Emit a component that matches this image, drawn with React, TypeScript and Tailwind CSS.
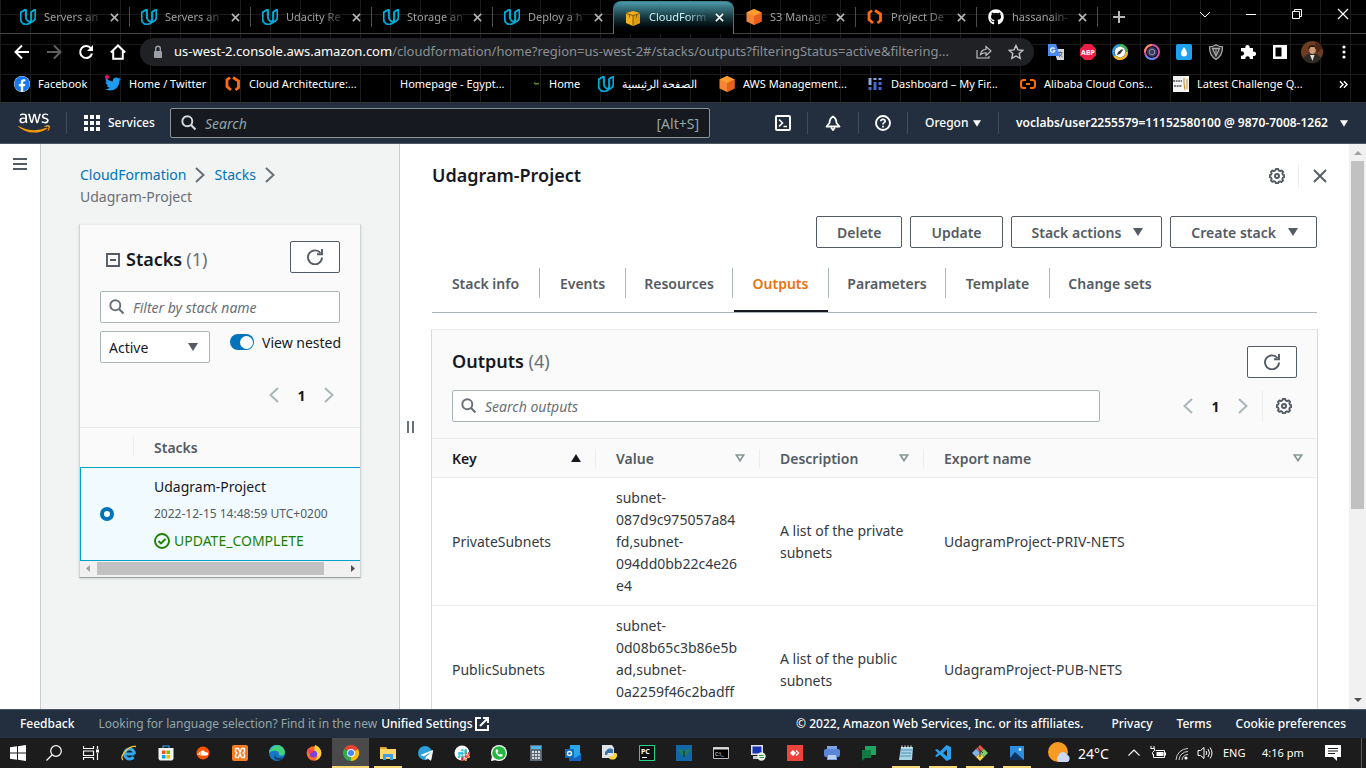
import React from "react";
import { FaAws, FaFacebook, FaGithub, FaSlack, FaSoundcloud, FaTelegramPlane, FaTwitter, FaWhatsapp } from "react-icons/fa";
import { SiUdacity } from "react-icons/si";

type Kids = { children?: React.ReactNode };

const Svg = ({ children, box = 16, cls = "size-4" }: Kids & { box?: number; cls?: string }) => (
  <svg viewBox={`0 0 ${box} ${box}`} className={`block shrink-0 ${cls}`} fill="none" aria-hidden="true">
    {children}
  </svg>
);

/* ---------- shared glyphs ---------- */

const Udacity = () => <SiUdacity stroke="#02b3e4" strokeWidth="1.4" className="block size-4 shrink-0 text-[#02b3e4]" />;

const Cube = () => (
  <Svg>
    <path d="M8 0l7.5 3.5v9L8 16 .5 12.500v-9z" fill="#f58534" />
    <path d="M8 0l7.500 3.500L8 7 .5 3.500z" fill="#ff9d2e" />
    <path d="M15.500 3.500v9L8 16V7z" fill="#e8611c" />
  </Svg>
);

const GoldCube = () => (
  <Svg>
    <path d="M1 3l7-2 7 2v10l-7 3-7-3z" fill="#f2b01e" />
    <path d="M8 6v10l7-3V4z" fill="#e09b12" />
    <path d="M1 3.500l7 2 7-2M8 5.500V16" stroke="#7a5200" strokeWidth=".9" />
    <path d="M4.500 4.500v3M11.500 4.500v3" stroke="#7a5200" strokeWidth=".9" />
  </Svg>
);

const Braces = () => (
  <Svg>
    <path d="M5 1.500L2 4v6.500L6 14" stroke="#ff6a13" strokeWidth="2.800" />
    <path d="M8 1.500l5.500 3.500v6.500l-3 2.500" stroke="#ff6a13" strokeWidth="2.800" />
  </Svg>
);

const SearchGlyph = ({ cls }: { cls: string }) => (
  <Svg cls={cls}>
    <circle cx="6.300" cy="6.300" r="5" stroke="currentColor" strokeWidth="1.900" />
    <path d="M10 10l4.500 4.500" stroke="currentColor" strokeWidth="2.100" />
  </Svg>
);

const RefreshGlyph = () => (
  <Svg cls="size-4 text-[#545b64]">
    <path d="M15 8.500A7 7 0 1 1 13.500 4" stroke="currentColor" strokeWidth="1.900" />
    <path d="M15 0v5.200H10" stroke="currentColor" strokeWidth="1.900" />
  </Svg>
);

const GearGlyph = () => (
  <Svg cls="size-4 text-[#545b64]">
    <path
      d="M6.800 1h2.400l.5 1.500 1.500.6 1.500-.7 1.400 1.500-.8 1.500.7 1.400 1.200.4v1.900l-1.300.5-.6 1.500.7 1.400-1.500 1.500-1.500-.7-1.300.6-.5 1.300H6.800l-.5-1.400-1.400-.6-1.500.7L2 12.500l.7-1.500-.6-1.400L.8 9.100V7.200l1.300-.5.6-1.400L2 3.900l1.400-1.500 1.500.7 1.400-.6z"
      stroke="currentColor"
      strokeWidth="1.900"
      strokeLinejoin="round"
    />
    <circle cx="8" cy="8" r="2" stroke="currentColor" strokeWidth="2" />
  </Svg>
);

const Chevron = ({ left, cls }: { left?: boolean; cls: string }) => (
  <Svg cls={cls}>
    <path d={left ? "M12 1L4.500 8l7.500 7" : "M4 1l7.500 7L4 15"} stroke="currentColor" strokeWidth="2" />
  </Svg>
);

const Caret = ({ cls }: { cls: string }) => (
  <svg viewBox="0 0 10 8" className={`block shrink-0 ${cls}`} aria-hidden="true">
    <path d="M0 0h10L5 8z" fill="currentColor" />
  </svg>
);

/* ---------- browser chrome ---------- */

const tabs = [
  { title: "Servers an", icon: <Udacity /> },
  { title: "Servers an", icon: <Udacity /> },
  { title: "Udacity Re", icon: <Udacity /> },
  { title: "Storage an", icon: <Udacity /> },
  { title: "Deploy a h", icon: <Udacity /> },
  { title: "CloudForm", icon: <GoldCube />, active: true },
  { title: "S3 Manage", icon: <Cube /> },
  { title: "Project De", icon: <Braces /> },
  { title: "hassanain-", icon: <FaGithub className="block size-4 shrink-0 text-white" /> },
];

const TabStrip = () => (
  <div className="flex h-[34px] shrink-0 items-stretch border-b border-[#444] pl-2">
    {tabs.map((t, i) => (
      <div
        key={i}
        className={
          t.active
            ? "relative -mb-px mt-px flex w-[121px] items-center rounded-t-lg border-x border-t border-[#3b7f8c] bg-linear-to-b from-[#4c9aaa] via-[#16343a] to-black pb-px pl-[11px] pr-1"
            : "relative flex w-[121px] items-center pl-3 pr-1 pt-px"
        }
      >
        {t.icon}
        <span
          className={`ml-2 w-[62px] overflow-hidden whitespace-nowrap text-[11px] mask-r-from-60% ${t.active ? "text-[#c5f4ff]" : "text-[#a0a0a0]"}`}
        >
          {t.title}
        </span>
        <button aria-label="Close tab" className={`flex size-4 items-center justify-center ${t.active ? "text-white" : "text-[#b8b8b8]"}`}>
          <Svg box={10} cls="size-[9px]">
            <path d="M1 1l8 8M9 1L1 9" stroke="currentColor" strokeWidth="1.700" />
          </Svg>
        </button>
        {!t.active && i !== 4 && <span className="absolute -right-px top-[7px] h-5 w-px bg-[#4c4c4c]" />}
      </div>
    ))}
    <button aria-label="New tab" className="flex w-11 items-center justify-center text-[#b8b8b8]">
      <Svg cls="size-4">
        <path d="M8 2v12M2 8h12" stroke="currentColor" strokeWidth="2" />
      </Svg>
    </button>
    <div className="ml-auto flex h-7 items-center gap-[30px] pr-[15px] text-white">
      <button aria-label="Search tabs">
        <Svg cls="size-4">
          <path d="M3 6l5 5 5-5" stroke="currentColor" />
        </Svg>
      </button>
      <button aria-label="Minimize">
        <Svg cls="size-4">
          <path d="M3 8.500h10" stroke="currentColor" />
        </Svg>
      </button>
      <button aria-label="Restore">
        <Svg cls="size-4">
          <path d="M3.500 5.500h7v7h-7zM5.500 5.500v-2h7v7h-2" stroke="currentColor" />
        </Svg>
      </button>
      <button aria-label="Close window">
        <Svg cls="size-4">
          <path d="M3 3l10 10M13 3L3 13" stroke="currentColor" strokeWidth="1.200" />
        </Svg>
      </button>
    </div>
  </div>
);

const extensions = [
  <Svg key="translate">
    <path d="M6 5h10v11H9z" fill="#d5d9dd" />
    <path d="M0 0h8l4 12H0z" fill="#4a8af4" />
    <path d="M6.500 4.800a2.200 2.200 0 1 0 .3 2H4.800" stroke="#fff" strokeWidth="1.100" />
    <path d="M10.500 8.500h4M12.500 7.500v1M14 9c-.5 2-1.500 3-3 4M11.500 9.500c.5 1.500 1.500 2.500 3 3.500" stroke="#5b6670" />
  </Svg>,
  <Svg key="abp">
    <path d="M4.700 0h6.600L16 4.700v6.600L11.300 16H4.700L0 11.300V4.700z" fill="#ed1e45" />
    <text x="8" y="10.800" fontSize="7" fontWeight="700" textAnchor="middle" fill="#fff">
      ABP
    </text>
  </Svg>,
  <Svg key="clock">
    <circle cx="8" cy="8" r="6.800" stroke="#2d9be0" strokeWidth="2.400" />
    <path d="M8 1.200A6.800 6.800 0 0 1 14.800 8" stroke="#39b54a" strokeWidth="2.400" />
    <path d="M14.800 8A6.800 6.800 0 0 1 2.500 12" stroke="#f6b91c" strokeWidth="2.400" />
    <circle cx="8" cy="8" r="5.400" fill="#fff" />
    <path d="M5 11l1-3 4-3 1 1-3 4z" fill="#333" />
  </Svg>,
  <Svg key="lens">
    <circle cx="8" cy="8" r="7" stroke="#d94fb0" strokeWidth="2" />
    <path d="M1 8a7 7 0 0 1 7-7" stroke="#f58b5b" strokeWidth="2" />
    <path d="M2 12a7 7 0 0 0 9 2" stroke="#4c8df5" strokeWidth="2" />
    <circle cx="8" cy="8" r="5" fill="#3a3a5e" />
    <circle cx="8" cy="8" r="2.800" stroke="#8d8fb8" />
  </Svg>,
  <Svg key="drop">
    <rect width="16" height="16" rx="2" fill="#1da1f2" />
    <path d="M8 3c2 3 3 4.500 3 6.500a3 3 0 0 1-6 0C5 7.500 6 6 8 3z" fill="#fff" />
  </Svg>,
  <Svg key="shield">
    <path d="M8 .8c2 1.500 4 2 6.500 2 0 6-1.500 10-6.500 12.500C3 12.800 1.500 8.800 1.500 2.800 4 2.800 6 2.300 8 .8z" fill="#222" stroke="#a9a9a9" strokeWidth="1.300" />
    <path d="M4.500 4.500h7L8 12z" stroke="#a9a9a9" strokeWidth="1.300" />
    <path d="M8 4.500V10" stroke="#a9a9a9" />
  </Svg>,
  <Svg key="puzzle">
    <path d="M1 4h4.500a2.200 2.200 0 1 1 4 0H13v3.800a2.200 2.200 0 1 1 0 4V15H9.700a2.200 2.200 0 1 0-4.200 0H1v-3.500a2.200 2.200 0 1 0 0-4z" fill="#fff" />
  </Svg>,
  <Svg key="panel">
    <path d="M1 1h14v14H1z M3.500 3.500v9h6v-9z" fill="#fff" fillRule="evenodd" />
  </Svg>,
];

const Toolbar = () => (
  <div className="flex h-9 shrink-0 items-center pl-[14px] pr-[14px] text-white">
    <div className="flex gap-4">
      <button aria-label="Back">
        <Svg>
          <path d="M15 8H2M8 1.500L1.500 8 8 14.500" stroke="currentColor" strokeWidth="2" />
        </Svg>
      </button>
      <button aria-label="Forward" className="text-[#5f5f5f]">
        <Svg>
          <path d="M1 8h13M8 1.500L14.500 8 8 14.500" stroke="currentColor" strokeWidth="2" />
        </Svg>
      </button>
      <button aria-label="Reload">
        <Svg>
          <path d="M13 4.500A6 6 0 1 0 14 9.500" stroke="currentColor" strokeWidth="2" />
          <path d="M15 1v6H9z" fill="currentColor" />
        </Svg>
      </button>
      <button aria-label="Home">
        <Svg>
          <path d="M.8 8.500L8 1.500l7.200 7M3.200 7v7.800h9.600V7" stroke="currentColor" strokeWidth="2" />
        </Svg>
      </button>
    </div>
    <div className="ml-[14px] flex h-7 min-w-0 flex-1 items-center rounded-full bg-[#202124] pl-[10px] pr-2 text-[#9aa0a6]">
      <Svg>
        <rect x="4" y="7" width="8" height="7" rx="1" fill="currentColor" />
        <path d="M5.700 7V4.500a2.300 2.300 0 0 1 4.600 0V7" stroke="currentColor" strokeWidth="1.400" />
      </Svg>
      <p className="ml-2 min-w-0 flex-1 overflow-hidden whitespace-nowrap text-[13px]">
        <span className="text-white">us-west-2.console.aws.amazon.com</span>
        <span className="text-[#8b8f94]">/cloudformation/home?region=us-west-2#/stacks/outputs?filteringStatus=active&amp;filtering...</span>
      </p>
      <button aria-label="Share" className="mr-4 text-[#c4c7cb]">
        <Svg>
          <path d="M1 6v8h12v-2M4.500 10.500C5 7 7 5.500 10 5.500V2.500l5 4.500-5 4.500V8.700C8 8.700 6 9 4.500 10.500z" stroke="currentColor" strokeWidth="1.100" />
        </Svg>
      </button>
      <button aria-label="Bookmark" className="mr-[2px] text-[#c4c7cb]">
        <Svg>
          <path d="M8 1.500l2 4.400 4.800.5-3.600 3.200 1 4.800L8 12l-4.200 2.400 1-4.800L1.200 6.400 6 5.900z" stroke="currentColor" strokeWidth="1.400" />
        </Svg>
      </button>
    </div>
    <div className="ml-[14px] flex items-center gap-4">
      {extensions}
      <Svg cls="-mx-[3px] size-[22px]" box={22}>
        <circle cx="11" cy="11" r="11" fill="#6b3d22" />
        <path d="M14 1.500a11 11 0 0 1 7 6L16 12z" fill="#4a2513" />
        <path d="M2 17l5-4 4-1 5 1 4 4a11 11 0 0 1-18 0z" fill="#2a2a26" />
        <ellipse cx="11.500" cy="9" rx="3.200" ry="4" fill="#d39a78" />
        <path d="M7.500 8.500C6.500 3 16 2.500 15 8.500L13.500 6h-4z" fill="#20130c" />
        <path d="M9 14l2.500 6 2-6z" fill="#e8ddd2" />
      </Svg>
      <button aria-label="Menu">
        <Svg>
          <circle cx="8" cy="3" r="1.600" fill="#fff" />
          <circle cx="8" cy="8" r="1.600" fill="#fff" />
          <circle cx="8" cy="13" r="1.600" fill="#fff" />
        </Svg>
      </button>
    </div>
  </div>
);

const bookmarks = [
  { w: "w-[91px]", label: "Facebook", icon: <FaFacebook className="block size-4 rounded-full bg-white text-[#1877f2]" /> },
  {
    w: "w-[120px]",
    label: "Home / Twitter",
    icon: (
      <span className="relative block">
        <FaTwitter className="block size-4 text-[#1d9bf0]" />
        <span className="absolute -top-px left-0 size-1 rounded-full bg-[#f0127a]" />
      </span>
    ),
  },
  { w: "w-[151px]", label: "Cloud Architecture:...", icon: <Braces /> },
  { w: "w-[149px]", label: "Homepage - Egypt...", icon: <span className="block size-4" /> },
  {
    w: "w-[73px]",
    label: "Home",
    icon: (
      <Svg>
        <path d="M9 7l2 1 3-.5" stroke="#5f8a1f" strokeWidth="1.500" />
      </Svg>
    ),
  },
  { w: "w-[121px]", label: "الصفحة الرئيسية", icon: <Udacity /> },
  { w: "w-[148px]", label: "AWS Management...", icon: <Cube /> },
  {
    w: "w-[153px]",
    label: "Dashboard – My Fir...",
    icon: (
      <Svg>
        <path d="M3 2v7M8 2v2M13 2v2" stroke="#8ba6e8" strokeWidth="3" />
        <path d="M3 11v3M8 6v8M13 6v3M13 11v3" stroke="#3f6bd8" strokeWidth="3" />
      </Svg>
    ),
  },
  {
    w: "w-[153px]",
    label: "Alibaba Cloud Cons...",
    icon: (
      <Svg>
        <path d="M6 4H3.500Q1 4 1 6.500v3Q1 12 3.500 12H6M10 4h2.500Q15 4 15 6.500v3Q15 12 12.500 12H10M6 8h4" stroke="#ff6a00" strokeWidth="2" />
      </Svg>
    ),
  },
  {
    w: "w-[150px]",
    label: "Latest Challenge Q...",
    icon: (
      <Svg>
        <path d="M0 0h16v16H0z" fill="#f4f4f4" />
        <path d="M0 5h9M1 10h8" stroke="#555" strokeWidth="1.500" strokeDasharray="2 .6" />
        <path d="M11 2v5l1 7M14 3v10" stroke="#c58a2e" />
      </Svg>
    ),
  },
];

const Bookmarks = () => (
  <nav aria-label="Bookmarks" className="flex h-[33px] shrink-0 items-center border-b border-[#333] pb-1 pl-[14px] pr-[18px] text-[11px] text-white">
    {bookmarks.map((b) => (
      <a key={b.label} href="#" className={`flex shrink-0 items-center gap-2 whitespace-nowrap ${b.w}`}>
        {b.icon}
        {b.label}
      </a>
    ))}
    <button aria-label="More bookmarks" className="ml-auto">
      <Svg cls="size-[9px]" box={10}>
        <path d="M1 1.500L4.500 5 1 8.500M5.500 1.500L9 5 5.500 8.500" stroke="#fff" strokeWidth="1.600" />
      </Svg>
    </button>
  </nav>
);

/* ---------- AWS header and footer ---------- */

const Divider = () => <span className="h-[22px] w-px shrink-0 bg-[#414d5c]" />;

const AwsHeader = () => (
  <header className="flex h-[41px] shrink-0 items-center border-b border-[#4d5864] bg-[#232f3e] text-[12px] font-semibold text-white">
    <svg width="0" height="0" className="absolute" aria-hidden="true">
      <linearGradient id="awsTint" gradientUnits="userSpaceOnUse" x1="0" y1="0" x2="0" y2="512">
        <stop offset=".62" stopColor="#fff" />
        <stop offset=".62" stopColor="#ff9900" />
      </linearGradient>
    </svg>
    <a href="#" aria-label="AWS" className="ml-[18px] mr-4 block">
      <FaAws fill="url(#awsTint)" className="block size-8" />
    </a>
    <Divider />
    <button className="ml-[17px] mr-[17px] flex w-[69px] items-center gap-2 font-medium">
      <Svg>
        <path d="M2 0v16M8 0v16M14 0v16" stroke="#fff" strokeWidth="4" strokeDasharray="4 2" />
      </Svg>
      Services
    </button>
    <label className="flex h-[30px] w-[540px] min-w-0 items-center rounded-xs border border-[#879596] bg-[#16191f] pl-[10px] pr-[10px] text-[14px] font-normal text-[#95a5a6]">
      <SearchGlyph cls="size-4 text-[#d5dbdb]" />
      <input aria-label="Search" placeholder="Search" className="ml-2 min-w-0 flex-1 bg-transparent outline-none placeholder:italic placeholder:text-[#95a5a6]" />
      [Alt+S]
    </label>
    <div className="ml-auto flex items-center pr-[18px]">
      <button aria-label="CloudShell" className="mr-4">
        <Svg>
          <rect x="1" y="1" width="14" height="14" rx="1" stroke="#fff" strokeWidth="2" />
          <path d="M4 4.500L7.500 8 4 11.500M8.500 11.500H12" stroke="#fff" strokeWidth="1.600" />
        </Svg>
      </button>
      <Divider />
      <button aria-label="Notifications" className="mx-[17px]">
        <Svg>
          <path d="M1.500 11.500h13L11.500 8c0-3-1-5-3.500-6.500C5.500 3 4.500 5 4.500 8z" stroke="#fff" strokeWidth="1.800" strokeLinejoin="round" />
          <path d="M6 12.500L8 15l2-2.500" stroke="#fff" strokeWidth="1.800" />
        </Svg>
      </button>
      <Divider />
      <button aria-label="Help" className="mx-4">
        <Svg>
          <circle cx="8" cy="8" r="7" stroke="#fff" strokeWidth="1.900" />
          <path d="M5.800 6.300C6 3.500 10.300 3.800 10.200 6.200 10 7.800 8 7.600 8 9.500M8 10.800v1.700" stroke="#fff" strokeWidth="1.700" />
        </Svg>
      </button>
      <Divider />
      <button className="ml-[17px] mr-[17px] flex w-14 items-center justify-between whitespace-nowrap font-medium">
        Oregon <Caret cls="h-[7px] w-2" />
      </button>
      <Divider />
      <button className="ml-[17px] flex w-[332px] items-center justify-between whitespace-nowrap">
        voclabs/user2255579=11152580100 @ 9870-7008-1262 <Caret cls="h-[7px] w-2" />
      </button>
    </div>
  </header>
);

const AwsFooter = () => (
  <footer className="flex h-[29px] shrink-0 items-center border-t border-[#4d5864] bg-[#232f3e] px-5 text-[12px] font-medium text-white">
    <button>Feedback</button>
    <p className="ml-6 flex items-center whitespace-nowrap font-normal text-[#95a5a6]">
      Looking for language selection? Find it in the new
      <a href="#" className="ml-1 flex items-center gap-[2px] font-medium text-white">
        Unified Settings
        <Svg cls="size-[14px]" box={14}>
          <path d="M6 1H1v12h12V8M8 1h5v5M13 1L5 9" stroke="#fff" strokeWidth="2" />
        </Svg>
      </a>
    </p>
    <span className="ml-auto whitespace-nowrap">© 2022, Amazon Web Services, Inc. or its affiliates.</span>
    <a href="#" className="ml-7">Privacy</a>
    <a href="#" className="ml-6">Terms</a>
    <a href="#" className="ml-6 whitespace-nowrap">Cookie preferences</a>
  </footer>
);

/* ---------- stacks side panel ---------- */

const Pager = () => (
  <div className="flex items-center text-[14px]">
    <button aria-label="Previous page" className="text-[#aab7b8]">
      <Chevron left cls="size-4" />
    </button>
    <button className="w-[39px] text-center font-bold">1</button>
    <button aria-label="Next page" className="text-[#aab7b8]">
      <Chevron cls="size-4" />
    </button>
  </div>
);

const RefreshButton = () => (
  <button aria-label="Refresh" className="flex h-8 w-[50px] shrink-0 items-center justify-center rounded-xs border border-[#545b64] bg-white">
    <RefreshGlyph />
  </button>
);

const StacksPanel = () => (
  <aside className="flex w-[360px] shrink-0 flex-col border-x border-[#c8cccc] bg-[#f2f3f3] pl-[38px] pr-[38px] pt-5">
    <nav aria-label="Breadcrumb" className="ml-px flex flex-wrap items-center leading-[22px]">
      <a href="#" className="text-[#0073bb]">CloudFormation</a>
      <Chevron cls="mx-[6px] size-4 text-[#687078]" />
      <a href="#" className="text-[#0073bb]">Stacks</a>
      <Chevron cls="mx-[6px] size-4 text-[#687078]" />
      <span className="w-full text-[#687078]">Udagram-Project</span>
    </nav>
    <section className="mt-4 border border-t-[#eaeded] border-x-[#d0d4d4] border-b-[#9aa3a5] bg-[#fafafa] shadow-sm">
      <div className="px-5 pt-4">
        <div className="flex items-start justify-between">
          <h2 className="ml-[5px] mt-[3px] flex items-center text-[18px] font-semibold leading-[30px]">
            <button aria-label="Collapse" className="mr-[5px] mt-[2px]">
              <Svg>
                <path d="M2 2h12v12H2zM5 8h6" stroke="#545b64" strokeWidth="1.900" />
              </Svg>
            </button>
            Stacks <span className="ml-1 font-normal text-[#687078]">(1)</span>
          </h2>
          <RefreshButton />
        </div>
        <label className="mt-[17px] flex h-8 items-center gap-2 rounded-xs border border-[#aab7b8] bg-white px-2">
          <SearchGlyph cls="size-4 text-[#687078]" />
          <input aria-label="Filter by stack name" placeholder="Filter by stack name" className="min-w-0 flex-1 bg-transparent outline-none placeholder:italic placeholder:text-[#687078]" />
        </label>
        <div className="mt-2 flex justify-between">
          <div className="relative h-8 w-[110px]">
            <select aria-label="Status filter" className="h-8 w-full appearance-none rounded-xs border border-[#aab7b8] bg-white pl-2">
              <option>Active</option>
            </select>
            <Caret cls="pointer-events-none absolute right-3 top-3 h-2 w-[10px] text-[#545b64]" />
          </div>
          <label className="flex h-[22px] items-center gap-2">
            <input type="checkbox" defaultChecked className="peer sr-only" />
            <span className="flex h-4 w-6 items-center justify-end rounded-full bg-[#0073bb] pr-px">
              <span className="size-[13px] rounded-full bg-white" />
            </span>
            <span className="w-[78px] whitespace-nowrap">View nested</span>
          </label>
        </div>
        <div className="flex h-16 items-center justify-end pr-[3px]">
          <Pager />
        </div>
      </div>
      <div className="overflow-hidden">
        <table className="w-full border-collapse text-left">
          <thead>
            <tr className="h-[39px] border-t border-[#eaeded] text-[#545b64]">
              <th className="w-[54px] p-0">
                <span className="ml-auto block h-5 w-px bg-[#eaeded]" />
              </th>
              <th className="pl-5 font-semibold">Stacks</th>
            </tr>
          </thead>
          <tbody>
            <tr className="h-[94px] bg-[#f1faff] shadow-[inset_1px_1px_0_#00a1c9,inset_0_-1px_0_#00a1c9]">
              <td className="p-0">
                <input
                  type="radio"
                  aria-label="Select Udagram-Project"
                  defaultChecked
                  className="ml-5 block size-[14px] appearance-none rounded-full border-4 border-[#0073bb] bg-white"
                />
              </td>
              <td className="pl-5 leading-[22px]">
                <div>Udagram-Project</div>
                <div className="my-[5px] whitespace-nowrap text-[12px] text-[#545b64]">2022-12-15 14:48:59 UTC+0200</div>
                <div className="flex items-center gap-1 text-[#1d8102]">
                  <Svg>
                    <circle cx="8" cy="8" r="7" stroke="currentColor" strokeWidth="1.900" />
                    <path d="M4.500 8l2.500 2.500 4.500-4.500" stroke="currentColor" strokeWidth="1.900" />
                  </Svg>
                  UPDATE_COMPLETE
                </div>
              </td>
            </tr>
          </tbody>
        </table>
        <div className="flex h-4 items-center justify-between bg-[#f1f1f1] pl-[6px] pr-[5px]">
          <svg viewBox="0 0 4 7" className="h-[7px] w-1" aria-hidden="true">
            <path d="M4 0v7L0 3.500z" fill="#a3a3a3" />
          </svg>
          <span className="ml-[7px] mr-auto h-[13px] w-[227px] bg-[#c1c1c1]" />
          <svg viewBox="0 0 4 7" className="h-[7px] w-1" aria-hidden="true">
            <path d="M0 0v7l4-3.500z" fill="#505050" />
          </svg>
        </div>
      </div>
    </section>
  </aside>
);

/* ---------- stack detail ---------- */

const ActionButton = ({ children, menu }: Kids & { menu?: boolean }) => (
  <button className="flex h-8 items-center gap-3 whitespace-nowrap rounded-xs border border-[#545b64] bg-white px-5 font-semibold text-[#545b64]">
    {children}
    {menu && <Caret cls="mr-[-2px] h-2 w-[10px]" />}
  </button>
);

const detailTabs = [
  { label: "Stack info", w: "w-[108px]" },
  { label: "Events", w: "w-[86px]" },
  { label: "Resources", w: "w-[107px]" },
  { label: "Outputs", w: "w-[96px]", active: true },
  { label: "Parameters", w: "w-[117px]" },
  { label: "Template", w: "w-[104px]" },
  { label: "Change sets", w: "w-[120px]" },
];

const rows = [
  {
    key: "PrivateSubnets",
    value: ["subnet-", "087d9c975057a84", "fd,subnet-", "094dd0bb22c4e26", "e4"],
    description: "A list of the private subnets",
    exportName: "UdagramProject-PRIV-NETS",
  },
  {
    key: "PublicSubnets",
    value: ["subnet-", "0d08b65c3b86e5b", "ad,subnet-", "0a2259f46c2badff"],
    description: "A list of the public subnets",
    exportName: "UdagramProject-PUB-NETS",
  },
];

const Th = ({ children, sorted, last, w }: Kids & { sorted?: boolean; last?: boolean; w: string }) => (
  <th className={`p-0 ${w}`}>
    <button className={`flex h-[19px] w-full items-center justify-between pl-5 pr-[14px] font-semibold ${last ? "" : "border-r border-[#eaeded]"} ${sorted ? "text-[#16191f]" : "text-[#545b64]"}`}>
      {children}
      <svg viewBox="0 0 10 8" className="block h-2 w-[10px]" aria-hidden="true">
        {sorted ? <path d="M0 8h10L5 0z" fill="#16191f" /> : <path d="M1.300 1h7.400L5 6.700z" stroke="#879596" strokeWidth="1.700" fill="none" />}
      </svg>
    </button>
  </th>
);

const Detail = () => (
  <main className="min-w-0 flex-1 overflow-hidden pl-[17px] pr-8 pt-[18px]">
    <div className="flex h-7 items-center">
      <h1 className="pb-[2px] text-[18px] font-semibold">Udagram-Project</h1>
      <button aria-label="Preferences" className="ml-auto mr-[13px]">
        <GearGlyph />
      </button>
      <span className="h-6 w-px bg-[#eaeded]" />
      <button aria-label="Close panel" className="-mr-[11px] ml-[13px]">
        <Svg>
          <path d="M2 2l12 12M14 2L2 14" stroke="#545b64" strokeWidth="1.900" />
        </Svg>
      </button>
    </div>
    <div className="mt-[26px] flex justify-end gap-2">
      <ActionButton>Delete</ActionButton>
      <ActionButton>Update</ActionButton>
      <ActionButton menu>Stack actions</ActionButton>
      <ActionButton menu>Create stack</ActionButton>
    </div>
    <div role="tablist" className="mt-3 flex h-[53px] items-stretch border-b border-[#aab7b8]">
      {detailTabs.map((t, i) => (
        <button
          key={t.label}
          role="tab"
          aria-selected={!!t.active}
          className={`flex flex-col justify-end whitespace-nowrap font-semibold ${t.w} ${t.active ? "text-[#ec7211]" : "text-[#545b64]"}`}
        >
          <span className={`flex h-[30px] w-full items-center justify-center ${i < 6 ? "border-r border-[#aab7b8]" : ""}`}>{t.label}</span>
          <span className="flex h-3.5 w-full items-end px-px">
            <span className={`h-[2px] w-full ${t.active ? "bg-[#16191f]" : ""}`} />
          </span>
        </button>
      ))}
    </div>
    <section className="-mx-px mt-4 border border-[#d5dbdb] border-t-[#eaeded] bg-[#fafafa]">
      <div className="px-5 pt-4">
        <div className="flex justify-between">
          <h2 className="text-[18px] font-semibold leading-[30px]">
            Outputs <span className="font-normal text-[#687078]">(4)</span>
          </h2>
          <RefreshButton />
        </div>
        <div className="mt-3 flex items-center pb-4">
          <label className="flex h-8 max-w-[648px] flex-1 items-center gap-2 rounded-xs border border-[#aab7b8] bg-white px-2">
            <SearchGlyph cls="size-4 text-[#687078]" />
            <input aria-label="Search outputs" placeholder="Search outputs" className="min-w-0 flex-1 bg-transparent outline-none placeholder:italic placeholder:text-[#687078]" />
          </label>
          <div className="ml-auto mr-[11px]">
            <Pager />
          </div>
          <button aria-label="Table preferences" className="mr-[5px] flex h-8 items-center border-l border-[#eaeded] pl-[13px]">
            <GearGlyph />
          </button>
        </div>
      </div>
      <table className="w-full table-fixed border-collapse text-left">
        <thead>
          <tr className="h-[39px] border-y border-[#eaeded]">
            <Th w="w-[164px]" sorted>Key</Th>
            <Th w="w-[164px]">Value</Th>
            <Th w="w-[164px]">Description</Th>
            <Th w="w-auto" last>Export name</Th>
          </tr>
        </thead>
        <tbody>
          {rows.map((r) => (
            <tr key={r.key} className="h-32 border-b border-[#eaeded] bg-white leading-[22px] text-[#333a44]">
              <td className="pl-5">{r.key}</td>
              <td className="pb-2 pl-5 pt-[9px] align-top">
                {r.value.map((line) => (
                  <React.Fragment key={line}>
                    {line}
                    <br />
                  </React.Fragment>
                ))}
              </td>
              <td className="pl-5 pr-4">{r.description}</td>
              <td className="pl-5">{r.exportName}</td>
            </tr>
          ))}
        </tbody>
      </table>
    </section>
  </main>
);

/* ---------- Windows taskbar ---------- */

const taskApps: { name: string; icon: React.ReactNode; open?: boolean; active?: boolean }[] = [
  {
    name: "Internet Explorer",
    icon: (
      <>
        <path d="M13.500 9H4.500M13.500 9A5 5 0 1 0 12.500 12" stroke="#35a8ee" strokeWidth="3" />
        <path d="M2 15C-2 11 8 0 15 1.500" stroke="#f6c72e" strokeWidth="1.300" />
      </>
    ),
  },
  {
    name: "Store",
    icon: (
      <>
        <path d="M5 3V1h6v2" stroke="#2ba3e6" strokeWidth="1.200" />
        <path d="M.5 3h15v11l-1.500 1.500h-12L.5 14z" fill="#f5f5f5" />
        <path d="M4 5.500h3.500V9H4z" fill="#f25022" />
        <path d="M8.500 5.500H12V9H8.500z" fill="#7fba00" />
        <path d="M4 10h3.500v3.500H4z" fill="#00a4ef" />
        <path d="M8.500 10H12v3.500H8.500z" fill="#ffb900" />
      </>
    ),
  },
  {
    name: "SoundCloud",
    icon: (
      <>
        <circle cx="8" cy="8" r="6.500" fill="#ff5500" />
        <path d="M3 8.500v1.500M4.500 7v3" stroke="#fff" />
        <path d="M5.500 10.500V6.500C7 5 9.500 5.500 10 7.200c2-.5 3.500.8 3 2.300-.2.700-.8 1-1.500 1z" fill="#fff" />
      </>
    ),
  },
  {
    name: "XAMPP",
    icon: (
      <>
        <rect width="16" height="16" rx="2" fill="#fb7a24" />
        <path d="M3.500 3.500h3L8 7.500l1.500-4h3v3L11 8l1.500 1.500v3h-3L8 8.500l-1.500 4h-3v-3L5 8 3.500 6.500z" stroke="#fff" strokeWidth="1.300" strokeLinejoin="round" />
      </>
    ),
  },
  {
    name: "Edge",
    icon: (
      <>
        <circle cx="8" cy="8" r="8" fill="#1577c9" />
        <path d="M0 8a8 8 0 0 1 16 0c0 3-5 3.500-6 1.500C11 6 4 4 0 8z" fill="#43d17c" />
        <path d="M0 8a8 8 0 0 1 9-7.900C5 1 2 4 0 8z" fill="#2fb3e0" />
        <path d="M6.500 8.500C5 11.500 8 14 14 12.500l-2 2.400C7 16.500 3 13 6.500 8.500z" fill="#1c1c1c" opacity=".55" />
      </>
    ),
  },
  {
    name: "Firefox",
    icon: (
      <>
        <circle cx="8" cy="8.500" r="7.300" fill="#ff6a2b" />
        <path d="M9 0c5 2 7 6 6 10-1 3-3 5-6 5.500 4-4 1-7-1-8.500 1-2 0-4 1-7z" fill="#ffd43a" />
        <circle cx="7.500" cy="9" r="3.600" fill="#7542e5" />
        <path d="M1 4c3 0 5 1 7 3-2 .5-3 1.500-5 1z" fill="#ff3d55" />
      </>
    ),
  },
  {
    name: "Chrome",
    open: true,
    active: true,
    icon: (
      <>
        <path d="M8 8L1.100 4A8 8 0 0 1 15 4z" fill="#ea4335" />
        <path d="M8 8l7-4A8 8 0 0 1 8 16z" fill="#fbbc05" />
        <path d="M8 8v8A8 8 0 0 1 1.100 4z" fill="#34a853" />
        <circle cx="8" cy="8" r="4" fill="#fff" />
        <circle cx="8" cy="8" r="3" fill="#4285f4" />
      </>
    ),
  },
  {
    name: "File Explorer",
    open: true,
    icon: (
      <>
        <path d="M0 2h6l1 2h9v10H0z" fill="#ffd767" />
        <path d="M0 2h6l1 2H0z" fill="#e2a52c" />
        <path d="M3 15V9h10v6h-3v-3H6v3z" fill="#3e9fe8" />
      </>
    ),
  },
  {
    name: "Telegram",
    icon: (
      <>
        <circle cx="8" cy="8" r="7" fill="#2aa1da" />
        <FaTelegramPlane x="3" y="3.500" width="9" height="9" color="#fff" />
      </>
    ),
  },
  {
    name: "Slack",
    icon: (
      <>
        <circle cx="8" cy="8" r="7.500" fill="#fff" />
        <FaSlack x="3" y="3" width="10" height="10" fill="url(#slackTint)" />
      </>
    ),
  },
  {
    name: "WhatsApp",
    icon: (
      <>
        <circle cx="8" cy="8" r="8" fill="#fff" />
        <path d="M0 16l1-5 4 4z" fill="#fff" />
        <circle cx="8" cy="8" r="6.800" fill="#25b840" />
        <path d="M5 4.500C4 6 5 8.500 6.500 10S10 12.300 11.500 11l.3-1.300-2-1-1 1C7.500 9.200 6.700 8.200 6.400 7.200l.9-1-.8-2z" fill="#fff" />
      </>
    ),
  },
  {
    name: "Calculator",
    icon: (
      <>
        <path d="M2 0h12v16H2z" fill="#5f6b76" />
        <path d="M3 1h10v3H3z" fill="#4db8f0" />
        <path d="M5 6v9M8 6v9M11 6v9" stroke="#d4dae0" strokeWidth="2" strokeDasharray="2 1" />
      </>
    ),
  },
  {
    name: "Outlook",
    icon: (
      <>
        <path d="M5 0h10v8l1 1v7H4z" fill="#28a8ea" />
        <path d="M4 9l6 4 6-4v7H4z" fill="#1565c0" />
        <path d="M0 4h9v9H0z" fill="#0f6cbd" />
        <circle cx="4.500" cy="8.500" r="2" stroke="#fff" strokeWidth="1.400" />
      </>
    ),
  },
  {
    name: "Python IDLE",
    icon: (
      <>
        <path d="M0 0h10l2 3v10H0z" fill="#dfe3e6" />
        <path d="M5 5c0-2 6-2 6 0v3H6L5 10H3V7z" fill="#3775a9" />
        <path d="M11 8h3c2 1 1 4 0 5-1 2-6 2-7 0v-2h5z" fill="#ffd43b" />
      </>
    ),
  },
  {
    name: "PyCharm",
    icon: (
      <>
        <path d="M.5.500h15v15H.5z" fill="#101010" stroke="#21d789" />
        <text x="2" y="8.800" fontSize="7" fontWeight="700" fill="#fff">PC</text>
        <path d="M3 12.500h5" stroke="#fff" />
      </>
    ),
  },
  {
    name: "Butterfly",
    icon: (
      <>
        <path d="M0 0h16v16H0z" fill="#1267a6" />
        <path d="M8 8L6 4.500 2.500 4l1 4 2 .5-.5 3 3-2 3 2-.5-3 2-.5 1-4-3.500.5z" fill="#1f7f5a" />
        <path d="M8 6v6" stroke="#222" />
      </>
    ),
  },
  {
    name: "Command Prompt",
    icon: (
      <>
        <path d="M.5 2.500h15v11H.5z" fill="#000" stroke="#bbb" />
        <path d="M0 3.500h16" stroke="#ddd" strokeWidth="2" />
        <text x="2" y="10.500" fontSize="5" fill="#fff">C:\_</text>
      </>
    ),
  },
  {
    name: "Remote Desktop",
    icon: (
      <>
        <path d="M1 0h12v10H1z" fill="#dfe3e8" />
        <path d="M2.500 1.500h9v7h-9z" fill="#1733b5" />
        <path d="M3 11h8v3H3z" fill="#c8ccd2" />
        <circle cx="11.500" cy="11.500" r="4.200" fill="#e9efe8" />
        <path d="M9 10.500h4.500M14 12.500H9.500" stroke="#3a9a3a" />
      </>
    ),
  },
  {
    name: "AnyDesk",
    icon: (
      <>
        <path d="M0 0h16v16H0z" fill="#ef443b" />
        <path d="M6 5l3 3-3 3-3-3z" fill="#fff" />
        <path d="M9 5.500L11.500 8 9 10.500" stroke="#fff" strokeWidth="1.300" />
      </>
    ),
  },
  {
    name: "Printer",
    icon: (
      <>
        <path d="M3 1h10v4H3zM3 10h10v5H3z" fill="#7da2e6" />
        <rect y="4" width="16" height="8" rx="2" fill="#5b86d8" />
        <path d="M4 10h8v4H4z" fill="#b9cdf3" />
      </>
    ),
  },
  {
    name: "Chat",
    icon: (
      <>
        <path d="M4 1h11v9H6L4 12z" fill="#1fa463" />
        <path d="M1 5h9v8H4l-3 3z" fill="#0f7b41" />
      </>
    ),
  },
  {
    name: "Notepad",
    open: true,
    icon: (
      <>
        <path d="M3 2h12l-1 13H1z" fill="#a7d3e6" />
        <path d="M3 5h11M3 8h10M2.500 11H13" stroke="#4f93b0" />
        <path d="M4 .500v3M7 .500v3M10 .500v3M13 .500v3" stroke="#eee" />
      </>
    ),
  },
  {
    name: "VS Code",
    open: true,
    icon: <path d="M11.500 0L16 2v12l-4.500 2L5 9.500 2 12 0 11l3-3-3-3 2-1 3 2.500zM12 4.500L8 8l4 3.500z" fill="#2aa0ee" fillRule="evenodd" />,
  },
  {
    name: "Git",
    open: true,
    icon: (
      <>
        <path d="M8 0l4 4-4 4-4-4z" fill="#e8584a" />
        <path d="M12 4l4 4-4 4-4-4z" fill="#78d168" />
        <path d="M4 4l4 4-4 4-4-4z" fill="#7db2ee" />
        <path d="M8 8l4 4-4 4-4-4z" fill="#f0d34c" />
        <path d="M5.500 2l2.500 3v7M8 5l3 3" stroke="#333" />
      </>
    ),
  },
  {
    name: "Photos",
    open: true,
    icon: (
      <>
        <path d="M1 1h14v14H1z" fill="#2a8fe0" />
        <path d="M1 13l5-6 9 8H1z" fill="#10335e" />
        <circle cx="11" cy="4.500" r="1.300" fill="#fff" />
      </>
    ),
  },
];

const Taskbar = () => (
  <div className="flex h-[30px] shrink-0 items-stretch bg-[#1c1c1c] text-white">
    <svg width="0" height="0" className="absolute" aria-hidden="true">
      <linearGradient id="slackTint" x1="0" y1="0" x2="1" y2="1">
        <stop offset=".3" stopColor="#36c5f0" />
        <stop offset=".5" stopColor="#2eb67d" />
        <stop offset=".6" stopColor="#e01e5a" />
        <stop offset=".8" stopColor="#ecb22e" />
      </linearGradient>
    </svg>
    <button aria-label="Start" className="flex w-9 items-center justify-center">
      <Svg>
        <path d="M0 2.300l7-1v6.200H0zM8 1.200L16 0v7.500H8zM0 8.500h7v6.200l-7-1zM8 8.500h8V16l-8-1.200z" fill="#fff" />
      </Svg>
    </button>
    <button aria-label="Search" className="flex w-9 items-center justify-center">
      <Svg>
        <circle cx="10" cy="6" r="5.300" stroke="#fff" strokeWidth="1.200" />
        <path d="M6 10L.5 15.500" stroke="#fff" strokeWidth="1.300" />
      </Svg>
    </button>
    <button aria-label="Task view" className="flex w-[38px] items-center justify-center">
      <Svg>
        <path d="M.5 1v2.500h10V1M.5 15v-2.500h10V15M.5 6h10v4.500H.5zM14.500 1v3M14.500 8v7" stroke="#fff" strokeWidth="1.200" />
        <path d="M13 4.500h3v3h-3z" fill="#fff" />
      </Svg>
    </button>
    {taskApps.map((a) => (
      <button key={a.name} aria-label={a.name} className={`flex w-[37px] flex-col items-center justify-between pt-[7px] ${a.active ? "bg-[#4a4a4a]" : ""}`}>
        <Svg>{a.icon}</Svg>
        <span className={`h-0.5 ${a.active ? "w-full" : "w-7"} ${a.open ? "bg-[#f8d775]" : ""}`} />
      </button>
    ))}
    <div className="ml-auto flex items-center whitespace-nowrap text-[12px]">
      <Svg cls="size-[22px]" box={22}>
        <circle cx="10" cy="10" r="10" fill="#f59a23" />
        <path d="M11 20a4 4 0 0 1 0-7c1-4 7-4 8 0 4 1 3 7 0 7z" fill="#c9d9f7" />
      </Svg>
      <span className="ml-2 w-[48px] text-[14px]">24°C</span>
      <Svg>
        <path d="M2.500 10.500L8 5l5.500 5.500" stroke="#fff" strokeWidth="1.200" />
      </Svg>
      <span className="ml-2">
        <Svg>
          <path d="M5.500 5.500h9v7H3.500V9M1 1v2M4 1v2M.5 3.500h4v2l-2 2v2" stroke="#fff" />
          <path d="M6.500 7h7v4h-7zM15 7.500h1v3h-1z" fill="#fff" />
        </Svg>
      </span>
      <span className="ml-2">
        <Svg>
          <path d="M2 15A12 12 0 0 1 14 3.500M5 15a9 9 0 0 1 9-8.500M8 15a6 6 0 0 1 6-5.500" stroke="#ccc" />
          <circle cx="12" cy="13" r="1.600" fill="#fff" />
        </Svg>
      </span>
      <span className="ml-[7px]">
        <Svg>
          <path d="M1 5.500h2.500L7 2.500v11l-3.500-3H1zM9 6q1.500 2 0 4M11 4q3 4 0 8M13 2.500q4 5.500 0 11" stroke="#fff" />
        </Svg>
      </span>
      <span className="ml-[10px] w-[39px] text-[11px]">ENG</span>
      <time className="w-[63px] text-[11px]">4:16 pm</time>
      <button aria-label="Notifications">
        <Svg>
          <path d="M0 0h16v12h-4v4l-4-4H0z" fill="#fff" />
          <path d="M3 3.500h10M3 6h10M3 8.500h7" stroke="#1c1c1c" />
        </Svg>
      </button>
      <span className="ml-5 mr-1 h-[30px] w-px bg-[#5a5a5a]" />
    </div>
  </div>
);

export default function App() {
  return (
    <div className="flex h-screen flex-col overflow-hidden bg-white font-['Noto_Sans','Liberation_Sans',sans-serif] text-[14px] text-[#16191f]">
      <div className="flex shrink-0 flex-col bg-black bg-[linear-gradient(90deg,#1b1b1b_1px,transparent_1px),linear-gradient(#1b1b1b_1px,transparent_1px)] bg-[size:30px_30px] bg-[position:0_14px]">
        <TabStrip />
        <Toolbar />
        <Bookmarks />
      </div>
      <AwsHeader />
      <div className="flex min-h-0 flex-1">
        <div className="w-10 shrink-0 pt-3">
          <button aria-label="Open navigation" className="mx-auto block">
            <Svg>
              <path d="M1 3h14M1 8h14M1 13h14" stroke="#545b64" strokeWidth="2" />
            </Svg>
          </button>
        </div>
        <StacksPanel />
        <div className="flex w-[15px] shrink-0 items-center justify-end">
          <span className="mr-px h-3 w-[7px] border-x-2 border-[#687078]" />
        </div>
        <Detail />
        <div className="flex w-[17px] shrink-0 flex-col items-center bg-[#f1f1f1] py-[7px]">
          <svg viewBox="0 0 8 4" className="h-1 w-2" aria-hidden="true">
            <path d="M0 4h8L4 0z" fill="#a3a3a3" />
          </svg>
          <span className="mt-[6px] h-[348px] w-[13px] bg-[#c1c1c1]" />
          <svg viewBox="0 0 8 4" className="mt-auto h-1 w-2" aria-hidden="true">
            <path d="M0 0h8L4 4z" fill="#505050" />
          </svg>
        </div>
      </div>
      <AwsFooter />
      <Taskbar />
    </div>
  );
}
